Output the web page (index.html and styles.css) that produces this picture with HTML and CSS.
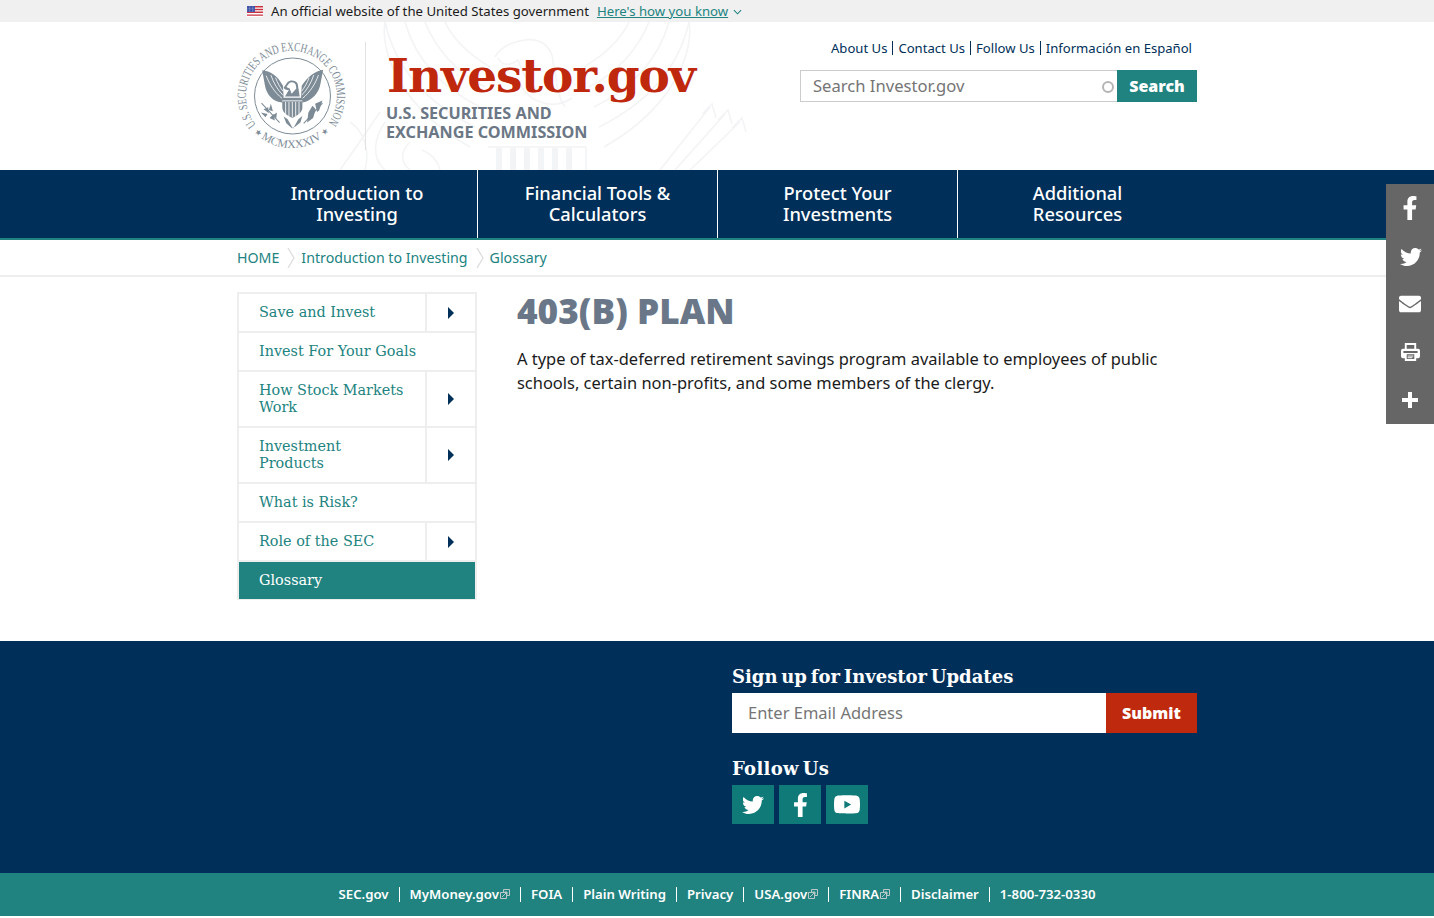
FILE: index.html
```html
<!DOCTYPE html>
<html lang="en">
<head>
<meta charset="utf-8">
<title>403(B) Plan | Investor.gov</title>
<link rel="stylesheet" href="styles.css">
</head>
<body>
<svg class="defs" width="0" height="0" aria-hidden="true">
  <defs>
    <symbol id="eagle" viewBox="70 90 220 200">
      <path fill="currentColor" d="M88 106C112 108 134 122 150 152L152 186L148 202C122 202 100 178 96 150Z"/>
      <path fill="currentColor" d="M270 104C246 108 224 124 206 152L204 186L208 202C236 198 258 172 262 146Z"/>
      <path fill="none" stroke="#fff" stroke-width="2.4" d="M100 122C110 148 125 172 148 190M114 120C122 144 134 164 150 180M128 128C134 144 142 158 150 168M256 120C246 148 230 172 208 190M242 120C234 144 222 164 206 180M228 128C222 144 214 158 206 168"/>
      <path fill="currentColor" d="M152 158L164 141C172 133 188 135 194 146L200 184H156L168 164C162 166 156 164 152 158Z"/>
      <path fill="#fff" d="M160 156L168 145C174 139 184 141 188 148L190 160L176 176L170 160Z"/>
      <path fill="currentColor" d="M148 188H208V216C208 234 192 240 178 248C164 240 148 234 148 216Z"/>
      <path fill="none" stroke="#fff" stroke-width="2.6" d="M148 197H208M158 200V236M168 200V242M178 200V246M188 200V242M198 200V236"/>
      <path fill="currentColor" d="M152 244L164 252L180 280L196 252L208 242L202 262L186 274L176 278L160 264Z"/>
      <path fill="none" stroke="currentColor" stroke-width="3" d="M86 204L140 262M212 264L268 204"/>
      <path fill="currentColor" d="M92 222L106 216L108 234ZM84 232L104 236L98 246ZM114 206L120 228L108 224ZM110 248L122 236L126 256ZM132 232L130 250L120 240ZM226 232L238 212L248 222L240 248L222 262ZM246 206L268 196L258 226L252 230Z"/>
    </symbol>
    <symbol id="i-fb" viewBox="0 0 320 512"><path fill="currentColor" d="M279.14 288l14.22-92.66h-88.91v-60.13c0-25.35 12.42-50.06 52.24-50.06h40.42V6.26S260.43 0 225.36 0c-73.22 0-121.08 44.38-121.08 124.72v70.62H22.89V288h81.39v224h100.17V288z"/></symbol>
    <symbol id="i-tw" viewBox="0 0 512 512"><path fill="currentColor" d="M459.37 151.716c.325 4.548.325 9.097.325 13.645 0 138.72-105.583 298.558-298.558 298.558-59.452 0-114.68-17.219-161.137-47.106 8.447.974 16.568 1.299 25.34 1.299 49.055 0 94.213-16.568 130.274-44.832-46.132-.975-84.792-31.188-98.112-72.772 6.498.974 12.995 1.624 19.818 1.624 9.421 0 18.843-1.3 27.614-3.573-48.081-9.747-84.143-51.98-84.143-102.985v-1.299c13.969 7.797 30.214 12.67 47.431 13.319-28.264-18.843-46.781-51.005-46.781-87.391 0-19.492 5.197-37.36 14.294-52.954 51.655 63.675 129.3 105.258 216.365 109.807-1.624-7.797-2.599-15.918-2.599-24.04 0-57.828 46.782-104.934 104.934-104.934 30.213 0 57.502 12.67 76.67 33.137 23.715-4.548 46.456-13.32 66.599-25.34-7.798 24.366-24.366 44.833-46.132 57.827 21.117-2.273 41.584-8.122 60.426-16.243-14.292 20.791-32.161 39.308-52.628 54.253z"/></symbol>
    <symbol id="i-ext" viewBox="0 0 10 10"><path fill="none" stroke="currentColor" stroke-width="1" d="M.5 3.5h6v6h-6zM3.5 3.5V.5h6v6h-3M2 8l5-5M4.5 3H7v2.5"/></symbol>
  </defs>
</svg>

<div class="gov-banner">
  <div class="wrap gov-inner">
    <svg class="flag" viewBox="0 0 16 11"><rect width="16" height="11" fill="#fff"/><path fill="#c8313e" d="M0 0h16v1.4H0zM0 2.8h16v1.4H0zM0 5.6h16V7H0zM0 8.4h16v1.4H0z"/><rect width="8" height="6" fill="#2b3f9e"/><path stroke="#fff" stroke-width=".6" stroke-dasharray=".7 .8" d="M.6 1h7M.6 2.4h7M.6 3.8h7M.6 5.2h7"/></svg>
    <span class="gov-text">An official website of the United States government</span>
    <a class="gov-link" href="#">Here's how you know</a>
    <svg class="gov-caret" viewBox="0 0 10 6"><path fill="none" stroke="#218380" stroke-width="1.2" d="M1 1l4 4 4-4"/></svg>
  </div>
</div>

<header class="site-header">
  <svg class="watermark" viewBox="0 0 410 148" aria-hidden="true">
    <g fill="none" stroke="currentColor" stroke-width="1.6">
      <path d="M45 0C40 30 60 85 130 125M45 0C55 45 85 80 135 105M65 0C75 35 100 65 140 85M85 0C95 25 115 50 145 65M105 0C112 15 125 30 150 45"/>
      <path d="M349 0C354 30 334 85 264 125M349 0C339 45 309 80 259 105M329 0C319 35 294 65 254 85M309 0C299 25 279 50 249 65M289 0C282 15 269 30 244 45"/>
      <path d="M155 35C160 25 172 20 185 18C205 15 213 30 213 40C218 60 215 70 225 85M158 36C162 44 170 44 178 38C182 52 190 62 197 68M180 62C190 82 215 88 232 76"/>
      <path d="M148 125H246V148"/>
      <path d="M0 148C20 120 30 105 40 90M10 100C25 110 30 130 25 148M45 100C35 115 30 135 45 148M70 120C60 130 60 140 70 148M82 128C92 132 98 140 100 148"/>
      <path d="M320 148L370 85M335 148L385 92M350 148L400 100M362 92L372 82L376 96M378 98L388 88L392 102M392 106L402 96L406 110"/>
    </g>
    <path fill="currentColor" d="M156 125h6v23h-6zM170 125h6v23h-6zM184 125h6v23h-6zM198 125h6v23h-6zM212 125h6v23h-6zM226 125h6v23h-6z"/>
  </svg>
  <div class="wrap header-inner">
    <a class="logo" href="#">
      <svg class="seal" viewBox="0 0 108 108">
        <defs>
          <path id="seal-top" d="M19 83A45.500 45.500 0 1 1 85 88"/>
          <path id="seal-bottom" d="M2.500 54A52 52 0 0 0 106.500 54"/>
        </defs>
        <text class="seal-text"><textPath href="#seal-top" textLength="202" lengthAdjust="spacingAndGlyphs">U.S. SECURITIES AND EXCHANGE COMMISSION</textPath></text>
        <text class="seal-text seal-bottom"><textPath href="#seal-bottom" startOffset="50%" text-anchor="middle"><tspan class="seal-star">★</tspan> MCMXXXIV <tspan class="seal-star">★</tspan></textPath></text>
        <circle cx="55.500" cy="54" r="38" fill="none" stroke="#7d8b96" stroke-width="1"/>
        <svg class="seal-eagle" x="19" y="23" width="74" height="67"><use href="#eagle"/></svg>
      </svg>
      <span class="logo-divider"></span>
      <span class="logo-text">
        <span class="logo-title">Investor.gov</span>
        <span class="logo-sub">U.S. SECURITIES AND<br>EXCHANGE COMMISSION</span>
      </span>
    </a>
    <div class="header-right">
      <ul class="top-links">
        <li><a href="#">About Us</a></li>
        <li><a href="#">Contact Us</a></li>
        <li><a href="#">Follow Us</a></li>
        <li><a href="#">Información en Español</a></li>
      </ul>
      <form class="search">
        <span class="search-field">
          <input class="search-input" type="text" placeholder="Search Investor.gov">
          <span class="search-dot"></span>
        </span>
        <button class="search-btn" type="button">Search</button>
      </form>
    </div>
  </div>
</header>

<nav class="main-nav">
  <div class="wrap nav-inner">
    <a class="nav-item" href="#">Introduction to<br>Investing</a>
    <a class="nav-item" href="#">Financial Tools &amp;<br>Calculators</a>
    <a class="nav-item" href="#">Protect Your<br>Investments</a>
    <a class="nav-item" href="#">Additional<br>Resources</a>
  </div>
</nav>

<aside class="share">
  <a class="share-item" href="#"><svg class="ic-fb"><use href="#i-fb"/></svg></a>
  <a class="share-item" href="#"><svg class="ic-tw"><use href="#i-tw"/></svg></a>
  <a class="share-item" href="#"><svg class="ic-mail" viewBox="0 64 512 384"><path fill="currentColor" d="M502.3 190.8c3.9-3.1 9.7-.2 9.7 4.7V400c0 26.5-21.5 48-48 48H48c-26.5 0-48-21.5-48-48V195.6c0-5 5.7-7.8 9.7-4.7 22.4 17.4 52.1 39.5 154.1 113.6 21.1 15.4 56.7 47.8 92.2 47.6 35.7.3 72-32.8 92.3-47.6 102-74.1 131.6-96.3 154-113.7zM256 320c23.2.4 56.6-29.2 73.4-41.4 132.7-96.3 142.8-104.7 173.4-128.7 5.800-4.500 9.200-11.500 9.200-18.900v-19c0-26.500-21.500-48-48-48H48C21.500 64 0 85.500 0 112v19c0 7.400 3.400 14.300 9.200 18.900 30.600 23.900 40.700 32.400 173.400 128.700 16.800 12.200 50.200 41.800 73.400 41.400z"/></svg></a>
  <a class="share-item" href="#"><svg class="ic-print" viewBox="0 0 20 19"><path fill="currentColor" fill-rule="evenodd" d="M4 0h12v6h2a2 2 0 0 1 2 2v6a2 2 0 0 1-2 2h-2v3H4v-3H2a2 2 0 0 1-2-2V8a2 2 0 0 1 2-2h2zM6 2v4h8V2zM2.500 8.500v2h15v-2zM6 12v5h8v-5z"/><path stroke="currentColor" stroke-width="1" d="M7 13.800h6M7 15.500h5"/></svg></a>
  <a class="share-item" href="#"><svg class="ic-plus" viewBox="0 0 16 16"><path fill="currentColor" d="M6 0h4v6h6v4h-6v6H6v-6H0V6h6z"/></svg></a>
</aside>

<div class="breadcrumb-bar">
  <div class="wrap breadcrumb">
    <a href="#">HOME</a>
    <svg class="crumb-sep" viewBox="0 0 8 20"><path fill="none" stroke="#ddd" stroke-width="1.300" d="M1 0l6 10-6 10"/></svg>
    <a href="#">Introduction to Investing</a>
    <svg class="crumb-sep" viewBox="0 0 8 20"><path fill="none" stroke="#ddd" stroke-width="1.300" d="M1 0l6 10-6 10"/></svg>
    <a href="#">Glossary</a>
  </div>
</div>

<main class="wrap content">
  <ul class="side-nav">
    <li class="side-row"><a href="#">Save and Invest</a><span class="side-arrow"></span></li>
    <li class="side-row"><a href="#">Invest For Your Goals</a></li>
    <li class="side-row tall"><a href="#">How Stock Markets Work</a><span class="side-arrow"></span></li>
    <li class="side-row tall"><a href="#">Investment Products</a><span class="side-arrow"></span></li>
    <li class="side-row"><a href="#">What is Risk?</a></li>
    <li class="side-row"><a href="#">Role of the SEC</a><span class="side-arrow"></span></li>
    <li class="side-row active"><a href="#">Glossary</a></li>
  </ul>
  <article class="article">
    <h1 class="page-title">403(B) PLAN</h1>
    <p class="definition">A type of tax-deferred retirement savings program available to employees of public schools, certain non-profits, and some members of the clergy.</p>
  </article>
</main>

<footer>
  <div class="footer-main">
    <div class="wrap footer-inner">
      <div class="footer-col">
        <h2 class="footer-title">Sign up for Investor Updates</h2>
        <form class="signup">
          <input class="signup-input" type="text" placeholder="Enter Email Address">
          <button class="signup-btn" type="button">Submit</button>
        </form>
        <h2 class="footer-title follow-title">Follow Us</h2>
        <div class="social">
          <a class="social-btn" href="#"><svg class="soc-tw"><use href="#i-tw"/></svg></a>
          <a class="social-btn" href="#"><svg class="soc-fb"><use href="#i-fb"/></svg></a>
          <a class="social-btn" href="#"><svg class="soc-yt" viewBox="15 64 546 384"><path fill="currentColor" d="M549.655 124.083c-6.281-23.65-24.787-42.276-48.284-48.597C458.781 64 288 64 288 64S117.22 64 74.629 75.486c-23.497 6.322-42.003 24.947-48.284 48.597-11.412 42.867-11.412 132.305-11.412 132.305s0 89.438 11.412 132.305c6.281 23.65 24.787 41.5 48.284 47.821C117.22 448 288 448 288 448s170.78 0 213.371-11.486c23.497-6.321 42.003-24.171 48.284-47.821 11.412-42.867 11.412-132.305 11.412-132.305s0-89.438-11.412-132.305zm-317.51 213.508V175.185l142.739 81.205-142.739 81.201z"/></svg></a>
        </div>
      </div>
    </div>
  </div>
  <div class="footer-links">
    <a href="#">SEC.gov</a>
    <a href="#">MyMoney.gov<svg class="ext"><use href="#i-ext"/></svg></a>
    <a href="#">FOIA</a>
    <a href="#">Plain Writing</a>
    <a href="#">Privacy</a>
    <a href="#">USA.gov<svg class="ext"><use href="#i-ext"/></svg></a>
    <a href="#">FINRA<svg class="ext"><use href="#i-ext"/></svg></a>
    <a href="#">Disclaimer</a>
    <a href="#">1-800-732-0330</a>
  </div>
</footer>
</body>
</html>
```
FILE: styles.css
```css
* { box-sizing: border-box; }
html, body { margin: 0; padding: 0; }
body {
  position: relative;
  font-family: "Noto Sans", "Open Sans", sans-serif;
  color: #1b1b1b;
  background: #fff;
  height: 918px;
  overflow: hidden;
}
a { text-decoration: none; color: inherit; }
ul { list-style: none; margin: 0; padding: 0; }
.defs { position: absolute; }
.wrap { width: 960px; margin: 0 auto; }

/* gov banner */
.gov-banner { height: 22px; background: #f0f0f0; }
.gov-inner { display: flex; align-items: center; height: 22px; padding-left: 10px; font-size: 13.2px; }
.flag { width: 16px; height: 11px; margin-right: 8px; }
.gov-text { margin-right: 8px; }
.gov-link { color: #218380; text-decoration: underline; }
.gov-caret { width: 9px; height: 6px; margin-left: 5px; margin-top: 2px; }

/* header */
.site-header { position: relative; height: 148px; overflow: hidden; }
.watermark {
  position: absolute;
  left: 340px;
  top: 0;
  width: 410px;
  height: 148px;
  color: #f3f4f5;
}
.header-inner { position: relative; display: flex; justify-content: space-between; }
.logo { display: flex; padding-top: 20px; }
.seal { width: 108px; height: 108px; flex: none; color: #7d8b96; overflow: visible; }
.seal-text { font-family: "Liberation Serif", serif; font-size: 12.5px; fill: #7d8b96; }
.seal-bottom { font-size: 11.5px; }
.seal-star { font-size: 8px; }
.logo-divider { width: 1px; height: 108px; margin: 0 21px 0 20px; background: #e2e2e2; }
.logo-text { display: flex; flex-direction: column; }
.logo-title {
  font-family: "DejaVu Serif", serif;
  font-weight: 700;
  font-size: 47px;
  line-height: 54px;
  color: #c0280e;
  margin-top: 7px;
  letter-spacing: -1.1px;
}
.logo-sub {
  font-weight: 700;
  font-size: 16.2px;
  line-height: 19px;
  color: #6b7785;
  margin: 1px 0 0 -1px;
}
.header-right { display: flex; flex-direction: column; align-items: flex-end; padding-top: 19px; }
.top-links { display: flex; font-size: 13.1px; line-height: 14px; color: #003057; padding-right: 5px; }
.top-links li + li { margin-left: 5px; padding-left: 5px; border-left: 1px solid #003057; }
.search { display: flex; margin-top: 15px; }
.search-field { position: relative; display: block; }
.search-input {
  display: block;
  width: 317px;
  height: 32px;
  border: 1px solid #ccc;
  border-right: 0;
  padding: 0 30px 2px 12px;
  font: 16.6px "Noto Sans", sans-serif;
  color: #333;
  outline: 0;
}
.search-input::placeholder { color: #757575; opacity: 1; }
.search-dot {
  position: absolute;
  right: 3px;
  top: 11px;
  width: 12px;
  height: 12px;
  border: 2px solid #b5b5b5;
  border-radius: 50%;
}
.search-btn {
  width: 80px;
  height: 32px;
  border: 0;
  padding: 0;
  background: #218380;
  color: #fff;
  font: 900 16px "Noto Sans", sans-serif;
}

/* nav */
.main-nav { height: 70px; background: #00305a; border-bottom: 2px solid #218380; }
.nav-inner { display: grid; grid-template-columns: 241px 240px 240px 239px; height: 68px; }
.nav-item {
  display: flex;
  align-items: center;
  justify-content: center;
  text-align: center;
  color: #fff;
  font-size: 18.3px;
  font-weight: 550;
  line-height: 21px;
  padding-bottom: 2px;
}
.nav-item:not(:last-child) { border-right: 1px solid #fff; }

/* share */
.share {
  position: absolute;
  right: 0;
  top: 184px;
  width: 48px;
  background: #666;
  color: #fff;
}
.share-item { display: flex; align-items: center; justify-content: center; height: 48px; }
.ic-fb { width: 16px; height: 24px; }
.ic-tw { width: 22px; height: 22px; margin: 2px 0 0 2px; }
.ic-mail { width: 22px; height: 18px; }
.ic-print { width: 19px; height: 18px; }
.ic-plus { width: 16px; height: 16px; }

/* breadcrumb */
.breadcrumb-bar { height: 37px; border-bottom: 2px solid #eee; }
.breadcrumb { display: flex; align-items: center; height: 35px; font-size: 14.2px; color: #218380; }
.crumb-sep { width: 8px; height: 20px; margin: 0 6px 0 8px; }

/* content */
.content { display: flex; padding-top: 15px; height: 364px; }
.side-nav { width: 240px; height: 308px; border: 2px solid #eee; flex: none; }
.side-row {
  display: flex;
  min-height: 39px;
  border-bottom: 2px solid #eee;
  font-family: "DejaVu Serif", serif;
  font-size: 14.4px;
  line-height: 17px;
  color: #218380;
}
.side-row a { flex: 1; display: flex; align-items: center; padding: 0 20px; }
.side-row.tall { min-height: 56px; }
.side-row.active { background: #218380; color: #fff; border-bottom: 0; min-height: 37px; }
.side-arrow {
  position: relative;
  width: 50px;
  flex: none;
  border-left: 2px solid #eee;
}
.side-arrow::after {
  content: "";
  position: absolute;
  left: 21px;
  top: 50%;
  margin-top: -6px;
  border-left: 6px solid #00305a;
  border-top: 6px solid transparent;
  border-bottom: 6px solid transparent;
}
.article { margin-left: 40px; width: 680px; }
.page-title {
  margin: -2px 0 0;
  font-size: 35.2px;
  line-height: 40px;
  font-weight: 900;
  color: #6a7788;
}
.definition { margin: 17px 0 0; font-size: 16.45px; line-height: 24px; color: #1b1b1b; }

/* footer */
.footer-main { height: 232px; background: #00305a; }
.footer-inner { padding-left: 495px; padding-top: 24px; }
.footer-title {
  margin: 0;
  font-family: "DejaVu Serif", serif;
  font-weight: 700;
  font-size: 18px;
  line-height: 24px;
  word-spacing: -2.5px;
  color: #fff;
}
.signup { display: flex; margin-top: 4px; }
.signup-input {
  width: 374px;
  height: 40px;
  border: 0;
  padding: 0 16px 2px;
  font: 16.5px "Noto Sans", sans-serif;
  outline: 0;
}
.signup-input::placeholder { color: #757575; opacity: 1; }
.signup-btn {
  width: 91px;
  height: 40px;
  border: 0;
  padding: 0;
  background: #bf2a0e;
  color: #fff;
  font: 900 16px "Noto Sans", sans-serif;
}
.follow-title { margin-top: 24px; letter-spacing: .3px; }
.social { display: flex; gap: 5px; margin-top: 4px; }
.social-btn {
  display: flex;
  align-items: center;
  justify-content: center;
  width: 42px;
  height: 39px;
  background: #0f7a78;
  color: #fff;
}
.soc-tw { width: 22px; height: 22px; }
.soc-fb { width: 15px; height: 24px; }
.soc-yt { width: 26px; height: 19px; }
.footer-links {
  display: flex;
  justify-content: center;
  align-items: center;
  height: 43px;
  background: #218380;
  color: #fff;
  font-size: 13.2px;
  font-weight: 600;
  line-height: 15px;
}
.footer-links a + a { margin-left: 10px; padding-left: 10px; border-left: 1px solid #fff; }
.ext { width: 10px; height: 10px; margin-left: 1px; color: #b9c9c9; }
```
